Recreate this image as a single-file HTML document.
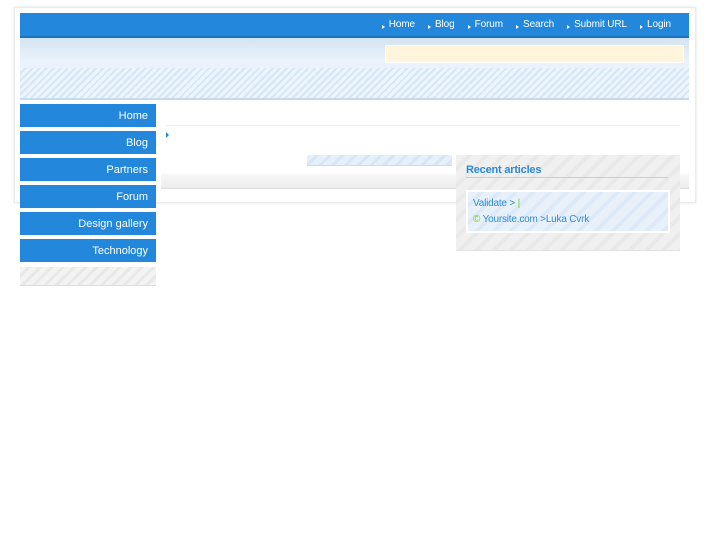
<!DOCTYPE html>
<html><head><style>
body{margin:0;width:727px;height:545px;background:#fff;font-family:"Liberation Sans",sans-serif;position:relative;overflow:hidden}
.a{position:absolute}
.frame{left:14px;top:7px;width:680px;height:194px;border:1px solid #ececec;box-shadow:0 0 3px #e4e4e4;background:#fff}
.top{left:20px;top:13px;width:669px;height:23px;background:#2388dc;border-bottom:2px solid #1b72bd}
.nav{right:18px;top:6px;font-size:10px;color:#fff;position:absolute;letter-spacing:-0.1px}
.nav span{margin-left:13px}
.nav span:before{content:"";display:inline-block;border-left:3px solid #fff;border-top:2.5px solid transparent;border-bottom:2.5px solid transparent;margin-right:4px;vertical-align:-2px}
.head{left:20px;top:38px;width:669px;height:60px;background:linear-gradient(#d4e3f2,#eaf3fb 40%,#eaf3fb);border-bottom:2px solid #c5dbef}
.stripes{left:20px;top:68px;width:669px;height:30px;background:repeating-linear-gradient(135deg,#edf5fc 0 3px,#d6e6f5 3px 5px)}
.yel{left:385px;top:45px;width:297px;height:16px;background:#fff5dc;border:1px solid #fff}
.side div{position:absolute;left:20px;width:136px;height:23px;background:#2388dc;color:#fff;font-size:11px;text-align:right;line-height:25px;box-sizing:border-box;padding-right:8px}
.grey{background:repeating-linear-gradient(135deg,#f3f3f3 0 5px,#e8e8e8 5px 8px)}
</style></head><body>
<div class="a frame"></div>
<div class="a top"><div class="nav"><span>Home</span><span>Blog</span><span>Forum</span><span>Search</span><span>Submit URL</span><span>Login</span></div></div>
<div class="a head"></div>
<div class="a stripes"></div>
<div class="a yel"></div>
<div class="side">
<div style="top:104px">Home</div>
<div style="top:131px">Blog</div>
<div style="top:158px">Partners</div>
<div style="top:185px">Forum</div>
<div style="top:212px">Design gallery</div>
<div style="top:239px">Technology</div>
</div>
<div class="a grey" style="left:20px;top:267px;width:136px;height:18px;border-bottom:1px solid #ddd"></div>
<div class="a" style="left:166px;top:125px;width:514px;height:1px;background:#eef2f6"></div>
<div class="a" style="left:166px;top:132px;border-left:3px solid #2388dc;border-top:3px solid transparent;border-bottom:3px solid transparent"></div>
<div class="a" style="left:307px;top:155px;width:145px;height:10px;background:repeating-linear-gradient(135deg,#e6f0fa 0 6px,#d6e6f5 6px 9px);border-bottom:1px solid #cadcee"></div>
<div class="a" style="left:161px;top:174px;width:528px;height:14px;background:linear-gradient(#f8f8f8,#ececec);border-bottom:1px solid #ddd"></div>
<div class="a grey" style="left:456px;top:155px;width:224px;height:95px;background:repeating-linear-gradient(135deg,#f0f0f0 0 8px,#e9e9e9 8px 12px);border-bottom:1px solid #e0e0e0"></div>
<div class="a" style="left:466px;top:164px;width:202px;font-size:11px;font-weight:bold;color:#2d8ad6;border-bottom:1px solid #ccc;padding-bottom:1px;letter-spacing:-0.2px">Recent articles</div>
<div class="a" style="left:466px;top:190px;border:2px solid #fff;background:repeating-linear-gradient(135deg,#e8f1fa 0 8px,#dde9f6 8px 12px);font-size:10px;color:#2d8ad6;padding:4px 0 0 5px;line-height:16px;height:35px;width:195px;letter-spacing:-0.2px">Validate &gt; <span style="color:#7c3">|</span><br><span style="color:#7c3">©</span> Yoursite.com &gt;Luka Cvrk</div>
</body></html>
